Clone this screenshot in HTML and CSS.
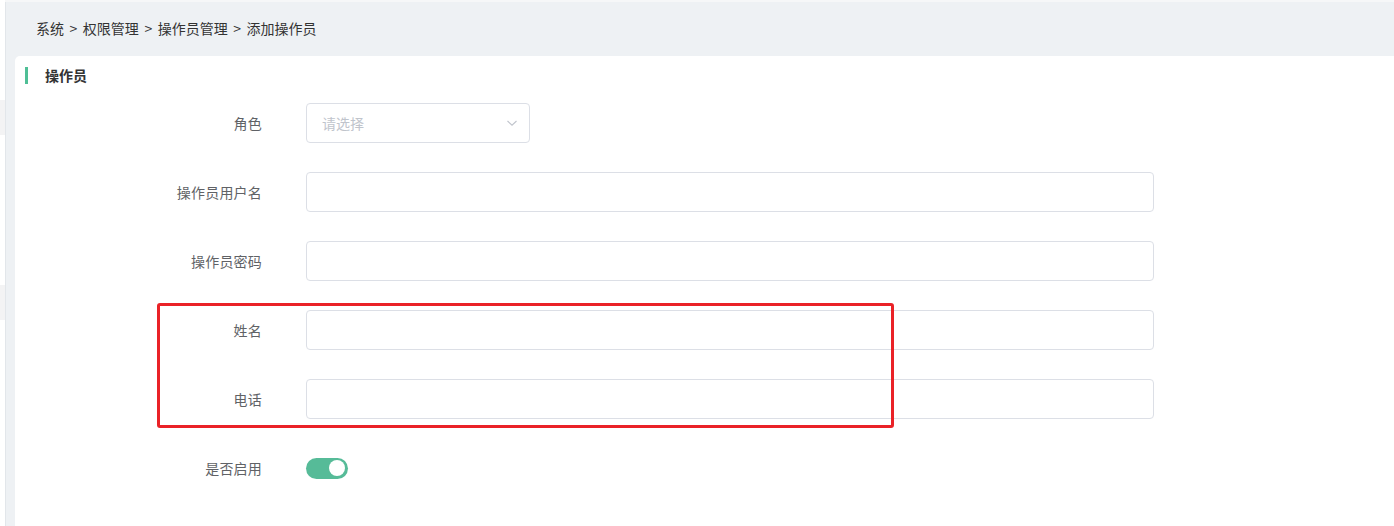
FILE: index.html
```html
<!DOCTYPE html>
<html lang="zh-CN">
<head>
<meta charset="utf-8">
<title>添加操作员</title>
<link rel="stylesheet" href="styles.css">
</head>
<body>
<div class="layout">
  <aside class="side">
    <div class="side-item s1"></div>
    <div class="side-item s2"></div>
  </aside>
  <main class="main">
    <div class="topline"></div>
    <div class="crumb">系统 &gt; 权限管理 &gt; 操作员管理 &gt; 添加操作员</div>
    <section class="card">
      <div class="card-title"><span class="bar"></span><span>操作员</span></div>
      <form class="form">
        <div class="row">
          <label class="label">角色</label>
          <div class="select">
            <span class="placeholder">请选择</span>
            <svg class="chev" width="12" height="12" viewBox="0 0 12 12"><path d="M1.5 4 L6 8.2 L10.5 4" fill="none" stroke="#c0c4cc" stroke-width="1.1"/></svg>
          </div>
        </div>
        <div class="row">
          <label class="label">操作员用户名</label>
          <div class="input"></div>
        </div>
        <div class="row">
          <label class="label">操作员密码</label>
          <div class="input"></div>
        </div>
        <div class="row">
          <label class="label">姓名</label>
          <div class="input"></div>
        </div>
        <div class="row">
          <label class="label">电话</label>
          <div class="input"></div>
        </div>
        <div class="row">
          <label class="label">是否启用</label>
          <div class="switch"><span class="knob"></span></div>
        </div>
      </form>
      <div class="highlight"></div>
    </section>
  </main>
</div>
</body>
</html>
```

FILE: styles.css
```css
* { box-sizing: border-box; }
html, body { margin: 0; padding: 0; }
body {
  width: 1394px;
  height: 526px;
  overflow: hidden;
  font-family: "Noto Sans CJK SC", "Noto Sans", sans-serif;
  background: #ffffff;
}
.layout {
  display: flex;
  height: 526px;
}
.side {
  width: 5px;
  flex: none;
  background: #ffffff;
  display: flex;
  flex-direction: column;
}
.side-item {
  height: 35px;
  background: #f3f3f4;
}
.s1 { margin-top: 100px; }
.s2 { margin-top: 150px; }
.main {
  flex: 1;
  background: #eef1f4;
  border-left: 1px solid #e2e6ea;
  display: flex;
  flex-direction: column;
  padding-left: 9px;
}
.topline {
  height: 2px;
  margin-left: -10px;
  background: #f6f7f8;
}
.crumb {
  height: 54px;
  line-height: 52px;
  padding-left: 21px;
  font-size: 14px;
  color: #333333;
  word-spacing: 2.4px;
}
.card {
  flex: 1;
  position: relative;
  background: #ffffff;
  border-top-left-radius: 5px;
  padding: 11px 0 0 10px;
}
.card-title {
  display: flex;
  align-items: center;
  gap: 17px;
  height: 17px;
  font-size: 14px;
  font-weight: bold;
  color: #333333;
}
.card-title span:last-child { margin-top: -2px; }
.bar {
  width: 3px;
  height: 17px;
  background: #4fbf96;
}
.form {
  margin-top: 19px;
  display: flex;
  flex-direction: column;
  gap: 29px;
}
.row {
  display: flex;
  align-items: center;
  height: 40px;
}
.label {
  width: 237px;
  text-align: right;
  font-size: 14px;
  color: #606266;
  margin-right: 44px;
  letter-spacing: 0.2px;
}
.input, .select {
  height: 40px;
  border: 1px solid #dcdfe6;
  border-radius: 4px;
  background: #ffffff;
}
.input { width: 848px; }
.select {
  width: 224px;
  display: flex;
  align-items: center;
  justify-content: space-between;
  padding: 0 11px 0 15px;
}
.placeholder {
  font-size: 14px;
  color: #c0c4cc;
}
.chev { display: block; }
.switch {
  width: 42px;
  height: 21px;
  border-radius: 11px;
  background: #56bb98;
  position: relative;
}
.knob {
  position: absolute;
  right: 3px;
  top: 2.5px;
  width: 16px;
  height: 16px;
  border-radius: 50%;
  background: #ffffff;
}
.highlight {
  position: absolute;
  left: 142px;
  top: 247px;
  width: 737px;
  height: 125px;
  border: 3px solid #ea2227;
  border-radius: 3px;
}
```
